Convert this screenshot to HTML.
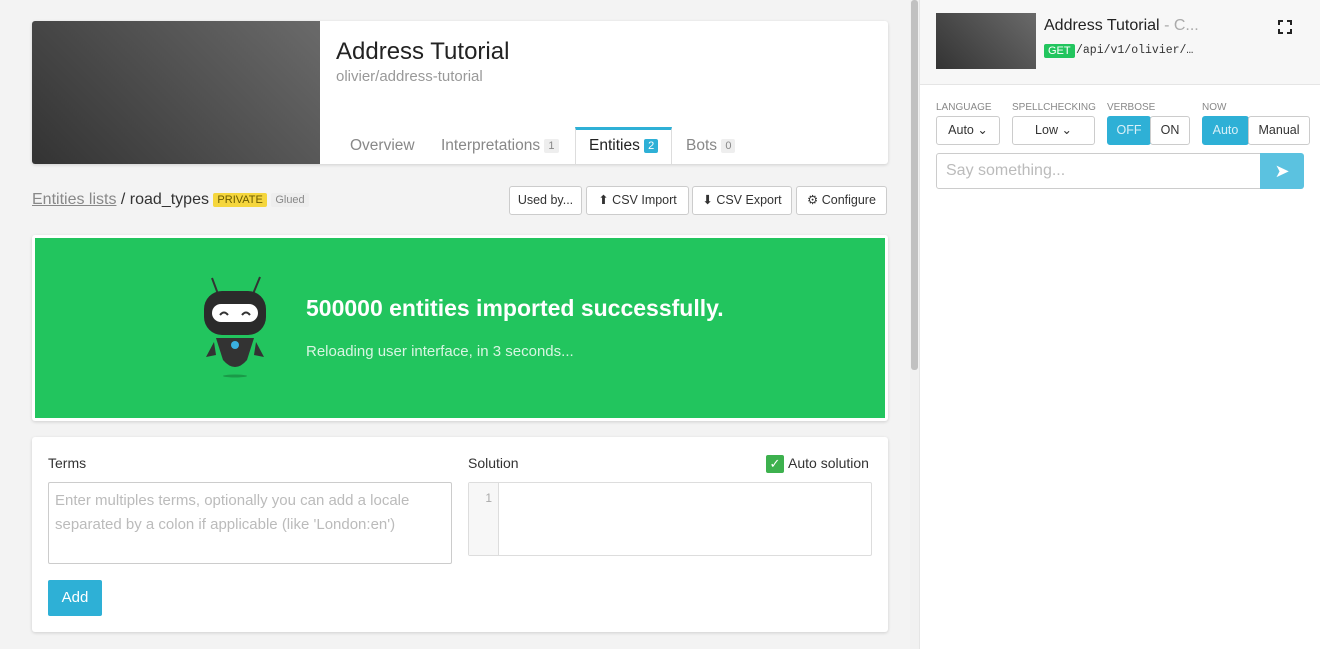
<!DOCTYPE html>
<html><head><meta charset="utf-8"><style>
*{box-sizing:border-box;margin:0;padding:0}
body{width:1320px;height:649px;overflow:hidden;background:#f3f3f3;font-family:"Liberation Sans",sans-serif;color:#333;position:relative}
.abs{position:absolute}
.card{background:#fff;border-radius:3px;box-shadow:0 1px 3px rgba(0,0,0,.15)}
.btn{position:absolute;top:186px;height:29px;background:#fff;border:1px solid #ccc;border-radius:3px;font-size:12.5px;line-height:27px;text-align:center;color:#333}
.badge{display:inline-block;font-size:11px;padding:1px 4px;border-radius:2px;background:#eee;color:#888;vertical-align:middle}
.lbl{position:absolute;top:102px;font-size:10px;color:#888}
.sel{position:absolute;top:116px;height:29px;border:1px solid #ccc;border-radius:3px;font-size:12.5px;line-height:27px;text-align:center;background:#fff}
</style></head><body>
<div class="card abs" style="left:32px;top:21px;width:856px;height:143px;overflow:hidden">
 <div class="abs" style="left:0;top:0;width:288px;height:143px;background:linear-gradient(45deg,#333,#6a6a6a)"></div>
 <div class="abs" style="left:304px;top:17px;font-size:24px;color:#222">Address Tutorial</div>
 <div class="abs" style="left:304px;top:47px;font-size:15px;color:#999">olivier/address-tutorial</div>
 <div class="abs" style="left:318px;top:116px;font-size:15.5px;color:#888">Overview</div>
 <div class="abs" style="left:409px;top:116px;font-size:15.5px;color:#888">Interpretations <span class="badge">1</span></div>
 <div class="abs" style="left:543px;top:106px;width:97px;height:40px;border-top:3px solid #2eb0d6;border-left:1px solid #ddd;border-right:1px solid #ddd;background:#fff"></div>
 <div class="abs" style="left:557px;top:116px;font-size:15.5px;color:#222">Entities <span class="badge" style="background:#2eb0d6;color:#fff">2</span></div>
 <div class="abs" style="left:654px;top:116px;font-size:15.5px;color:#888">Bots <span class="badge">0</span></div>
</div>
<div class="abs" style="left:32px;top:191px;font-size:16px;color:#333"><span style="color:#888;text-decoration:underline">Entities lists</span> / road_types <span class="badge" style="background:#f5d63d;color:#6a5a00">PRIVATE</span> <span class="badge">Glued</span></div>
<div class="btn" style="left:509px;width:73px">Used by...</div>
<div class="btn" style="left:586px;width:103px">⬆ CSV Import</div>
<div class="btn" style="left:692px;width:100px">⬇ CSV Export</div>
<div class="btn" style="left:796px;width:91px">⚙ Configure</div>
<div class="abs" style="left:32px;top:235px;width:856px;height:186px;background:#fff;border-radius:3px;box-shadow:0 1px 3px rgba(0,0,0,.15)"></div>
<div class="abs" style="left:35px;top:238px;width:850px;height:180px;background:#22c55e"></div>
<svg class="abs" style="left:200px;top:274px" width="70" height="106" viewBox="0 0 70 106">
 <line x1="12" y1="4" x2="18" y2="20" stroke="#333" stroke-width="2"/><line x1="60" y1="3" x2="53" y2="20" stroke="#333" stroke-width="2"/>
 <rect x="4" y="17" width="62" height="44" rx="18" fill="#2b2b2b"/>
 <rect x="12" y="30" width="46" height="18" rx="9" fill="#fff"/>
 <path d="M20 41q4-5 8 0M42 41q4-5 8 0" stroke="#333" stroke-width="2" fill="none"/>
 <path d="M14 68l-8 15 10-2zM56 68l8 15-10-2z" fill="#333"/>
 <path d="M16 64h38l-7 22q-12 14-24 0z" fill="#333"/>
 <circle cx="35" cy="71" r="4" fill="#3ab0e0"/>
 <ellipse cx="35" cy="102" rx="12" ry="1.5" fill="#1a9a48"/>
</svg>
<div class="abs" style="left:306px;top:295px;font-size:23px;font-weight:bold;color:#fff">500000 entities imported successfully.</div>
<div class="abs" style="left:306px;top:343px;font-size:15px;color:#d8f5e2">Reloading user interface, in 3 seconds...</div>
<div class="card abs" style="left:32px;top:437px;width:856px;height:195px"></div>
<div class="abs" style="left:48px;top:455px;font-size:14px">Terms</div>
<div class="abs" style="left:48px;top:482px;width:404px;height:82px;border:1px solid #ccc;border-radius:2px;padding:6px;font-size:15px;line-height:24px;color:#bbb">Enter multiples terms, optionally you can add a locale separated by a colon if applicable (like 'London:en')</div>
<div class="abs" style="left:468px;top:455px;font-size:14px">Solution</div>
<div class="abs" style="left:766px;top:455px;width:18px;height:18px;background:#3db14e;border-radius:2px;color:#fff;font-size:13px;text-align:center;line-height:18px">✓</div>
<div class="abs" style="left:788px;top:455px;font-size:14px">Auto solution</div>
<div class="abs" style="left:468px;top:482px;width:404px;height:74px;border:1px solid #ddd;border-radius:2px;background:#fff"><div style="width:30px;height:72px;background:#f7f7f7;border-right:1px solid #ddd;font-size:12px;color:#aaa;text-align:right;padding:8px 6px 0 0">1</div></div>
<div class="abs" style="left:48px;top:580px;width:54px;height:36px;background:#2eb0d6;border-radius:2px;color:#fff;font-size:15px;line-height:36px;text-align:center">Add</div>
<div class="abs" style="left:910px;top:0;width:9px;height:649px;background:#f1f1f1"></div>
<div class="abs" style="left:911px;top:0;width:7px;height:370px;background:#c1c1c1;border-radius:3px"></div>
<div class="abs" style="left:919px;top:0;width:401px;height:649px;background:#fff;border-left:1px solid #e5e5e5"></div>
<div class="abs" style="left:920px;top:0;width:400px;height:85px;background:#f7f7f7;border-bottom:1px solid #e5e5e5"></div>
<div class="abs" style="left:936px;top:13px;width:100px;height:56px;background:linear-gradient(45deg,#333,#6a6a6a)"></div>
<div class="abs" style="left:1044px;top:17px;font-size:16px;color:#222">Address Tutorial <span style="color:#aaa">- C...</span></div>
<div class="abs" style="left:1044px;top:44px;font-size:11px;background:#22c55e;color:#fff;padding:1px 4px;border-radius:2px">GET</div>
<div class="abs" style="left:1076px;top:44px;font-size:11.5px;font-family:'Liberation Mono',monospace;color:#333">/api/v1/olivier/…</div>
<svg class="abs" style="left:1278px;top:20px" width="14" height="14" viewBox="0 0 14 14"><path d="M1 5V1h4M9 1h4v4M13 9v4H9M5 13H1V9" stroke="#222" stroke-width="2" fill="none"/></svg>
<div class="lbl" style="left:936px">LANGUAGE</div>
<div class="lbl" style="left:1012px">SPELLCHECKING</div>
<div class="lbl" style="left:1107px">VERBOSE</div>
<div class="lbl" style="left:1202px">NOW</div>
<div class="sel" style="left:936px;width:64px">Auto ⌄</div>
<div class="sel" style="left:1012px;width:83px">Low ⌄</div>
<div class="sel" style="left:1107px;width:44px;background:#2eb0d6;color:#d8f0f8;border-color:#2eb0d6">OFF</div>
<div class="sel" style="left:1150px;width:40px">ON</div>
<div class="sel" style="left:1202px;width:47px;background:#2eb0d6;color:#d8f0f8;border-color:#2eb0d6">Auto</div>
<div class="sel" style="left:1248px;width:62px">Manual</div>
<div class="abs" style="left:936px;top:153px;width:325px;height:36px;border:1px solid #ccc;border-radius:3px 0 0 3px;font-size:16px;color:#bbb;line-height:34px;padding-left:9px">Say something...</div>
<div class="abs" style="left:1260px;top:153px;width:44px;height:36px;background:#5bc2e0;border-radius:0 3px 3px 0;color:#fff;font-size:18px;text-align:center;line-height:36px">➤</div>
</body></html>
